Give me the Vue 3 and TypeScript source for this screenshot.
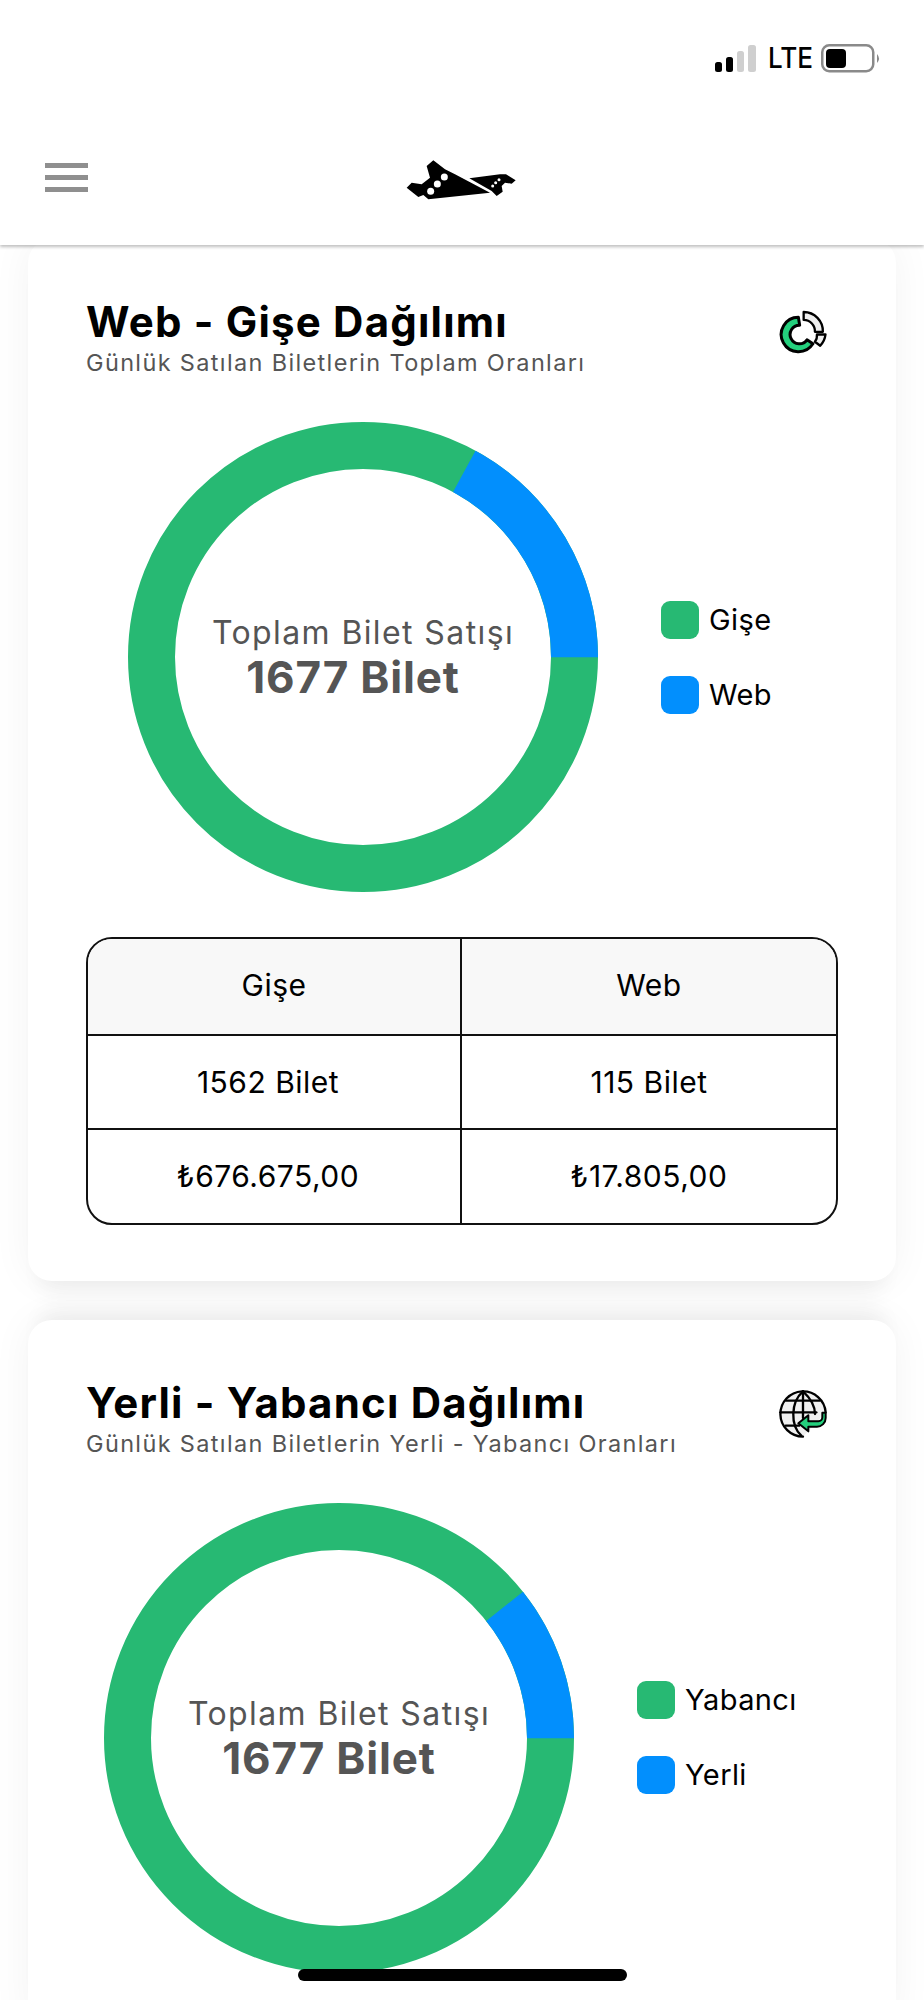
<script setup lang="ts">
interface Row { left: string; right: string }
interface Donut {
  title: string
  subtitle: string
  startDeg: number
  labels: [string, string]
  icon: 'pie' | 'globe'
}

const R = 211.5
const C = 2 * Math.PI * R

function blueDash(start: number) {
  const len = ((90 - start) / 360) * C
  return `${len} ${C - len}`
}
function blueOffset(start: number) {
  return -(start / 360) * C
}

const rows: Row[] = [
  { left: '1562 Bilet', right: '115 Bilet' },
  { left: '₺676.675,00', right: '₺17.805,00' },
]

const cards: Donut[] = [
  { title: 'Web - Gişe Dağılımı', subtitle: 'Günlük Satılan Biletlerin Toplam Oranları', startDeg: 28.6, labels: ['Gişe', 'Web'], icon: 'pie' },
  { title: 'Yerli - Yabancı Dağılımı', subtitle: 'Günlük Satılan Biletlerin Yerli - Yabancı Oranları', startDeg: 51.5, labels: ['Yabancı', 'Yerli'], icon: 'globe' },
]
</script>

<template>
  <div class="page">
    <div class="statusbar">
      <svg class="signal" width="41" height="27" viewBox="0 0 41 27">
        <rect x="0" y="17" width="7" height="10" rx="2.5" fill="#000" />
        <rect x="11" y="12" width="7" height="15" rx="2.5" fill="#000" />
        <rect x="22" y="6" width="7" height="21" rx="2.5" fill="#cfcfcf" />
        <rect x="33" y="0" width="8" height="27" rx="2.5" fill="#cfcfcf" />
      </svg>
      <span class="lte">LTE</span>
      <svg class="battery" width="60" height="29" viewBox="0 0 60 29">
        <rect x="1.25" y="1.25" width="51" height="26" rx="7" fill="#fff" stroke="#8a8a8a" stroke-width="2.5" />
        <rect x="5" y="5" width="20" height="19" rx="4" fill="#000" />
        <path d="M56 10 q4 4.5 0 9 z" fill="#8a8a8a" />
      </svg>
    </div>

    <header class="nav">
      <div class="burger"><i></i><i></i><i></i></div>
      <svg class="logo" width="160" height="80" viewBox="0 0 480 240">
        <path fill="#000" d="M80 140 L95 125 L125 130 L150 110 L140 75 L160 58 L195 85 L225 100 L330 155 L145 175 L130 162 L115 168 Z" />
        <path fill="#000" d="M268 112 L360 100 L378 100 L407 118 L395 128 L375 125 L365 135 L368 152 L350 165 L335 150 Z" />
        <circle cx="193" cy="108" r="10.5" fill="#fff" />
        <circle cx="172" cy="129" r="10.5" fill="#fff" />
        <circle cx="152" cy="151" r="10.5" fill="#fff" />
        <circle cx="357" cy="116" r="4.5" fill="#fff" />
        <circle cx="347" cy="125" r="4.5" fill="#fff" />
        <circle cx="338" cy="135" r="4.5" fill="#fff" />
      </svg>
    </header>

    <main class="content">
      <section v-for="(card, i) in cards" :key="card.title" class="card" :class="i === 0 ? 'card-first' : 'card-second'">
        <div class="card-head">
          <div class="heading">
            <h2>{{ card.title }}</h2>
            <p>{{ card.subtitle }}</p>
          </div>
          <svg v-if="card.icon === 'pie'" class="head-icon" width="50" height="48" viewBox="85 50 150 145" fill="none" stroke="#000" stroke-width="9" stroke-linejoin="round">
            <path d="M146 78 A52 52 0 1 0 190 158 L172 146 A28 28 0 1 1 150 102 Z" fill="#24d07d" />
            <path d="M162 62 A58 58 0 0 1 220 122 L196 122 A34 34 0 0 0 162 86 Z" fill="#efefef" stroke-width="7" />
            <path d="M202 130 L228 130 A58 58 0 0 1 212 164 L196 152 A30 30 0 0 0 202 130 Z" fill="#efefef" stroke-width="7" />
          </svg>
          <svg v-else class="head-icon" width="50" height="50" viewBox="55 55 150 150" fill="none" stroke="#000" stroke-width="7" stroke-linecap="round">
            <path d="M198 125 A68 68 0 1 0 130 198" fill="#f0f0f0" />
            <path d="M130 62 C92 95 92 165 125 195" />
            <path d="M130 62 C155 85 166 108 166 130" />
            <path d="M130 62 V142" />
            <path d="M80 90 H180" />
            <path d="M62 125 H170" />
            <path d="M78 165 H118" />
            <path d="M146 134 L116 158 L146 182 V168 H172 A26 26 0 0 0 198 142 V126 H188 V140 A12 12 0 0 1 176 152 H146 Z" fill="#24d07d" stroke-width="6" stroke-linejoin="round" />
          </svg>
        </div>

        <div class="chart-row">
          <div class="donut">
            <svg width="470" height="470" viewBox="0 0 470 470">
              <circle cx="235" cy="235" :r="R" fill="none" stroke="#27b973" stroke-width="47" />
              <circle
                cx="235" cy="235" :r="R" fill="none" stroke="#028ffd" stroke-width="47"
                :stroke-dasharray="blueDash(card.startDeg)"
                :stroke-dashoffset="blueOffset(card.startDeg)"
                transform="rotate(-90 235 235)"
              />
            </svg>
            <div class="donut-label">
              <span class="donut-cap">Toplam Bilet Satışı</span>
              <strong class="donut-val">1677 Bilet</strong>
            </div>
          </div>
          <ul class="legend">
            <li><span class="swatch green"></span>{{ card.labels[0] }}</li>
            <li><span class="swatch blue"></span>{{ card.labels[1] }}</li>
          </ul>
        </div>

        <div v-if="i === 0" class="table">
          <div class="cell th">Gişe</div>
          <div class="cell th last">Web</div>
          <template v-for="row in rows" :key="row.left">
            <div class="cell shifted">{{ row.left }}</div>
            <div class="cell last">{{ row.right }}</div>
          </template>
        </div>
      </section>
    </main>

    <div class="home"></div>
  </div>
</template>

<style>
html, body { margin: 0; background: #fff; }
</style>

<style scoped>
.page {
  position: relative;
  width: 924px;
  height: 2000px;
  overflow: hidden;
  background: #fff;
  font-family: Inter, "Noto Sans", sans-serif;
  color: #000;
}
.statusbar {
  position: relative;
  z-index: 3;
  height: 145px;
  box-sizing: border-box;
  padding: 44px 43px 0 0;
  display: flex;
  justify-content: flex-end;
  align-items: flex-start;
  background: #fff;
}
.signal { margin-right: 12px; margin-top: 1px; }
.lte { font-size: 29px; line-height: 28px; font-weight: 500; margin-right: 13px; transform: scaleX(.9); transform-origin: left; width: 40px; }
.nav {
  position: relative;
  z-index: 2;
  height: 100px;
  background: #fff;
  box-shadow: 0 2px 3px rgba(0, 0, 0, .25);
  display: flex;
  align-items: center;
  justify-content: center;
}
.burger {
  position: absolute;
  left: 45px;
  top: 18px;
  width: 43px;
  display: flex;
  flex-direction: column;
  gap: 7px;
}
.burger i { display: block; height: 5px; background: #8f8f8f; }
.logo { margin-bottom: 28px; margin-right: 4px; }
.content {
  display: flex;
  flex-direction: column;
  gap: 39px;
  padding: 0 28px;
  margin-top: -6px;
}
.card {
  background: #fff;
  border-radius: 24px;
  padding: 62px 57px 56px 58px;
}
.card-first { box-shadow: 0 0 40px rgba(0, 0, 0, .05), 0 22px 20px -12px rgba(0, 0, 0, .05); }
.card-second { box-shadow: 0 0 40px rgba(0, 0, 0, .05), 0 -22px 20px -12px rgba(0, 0, 0, .05); }
.card-head {
  display: flex;
  justify-content: space-between;
  align-items: flex-start;
}
h2 { margin: 0; font-size: 42px; line-height: 42px; font-weight: 700; letter-spacing: 1.2px; }
.heading p {
  margin: 8px 0 0;
  font-size: 23.5px;
  line-height: 24px;
  color: #555;
  letter-spacing: 1.35px;
}
.head-icon { margin: 7px 11px 0 0; }
.chart-row {
  display: flex;
  align-items: center;
  margin-top: 47px;
}
.card-first .chart-row { padding-left: 42px; }
.card-second .chart-row { padding-left: 18px; }
.donut { position: relative; width: 470px; height: 470px; }
.donut svg { display: block; }
.donut-label {
  position: absolute;
  inset: 0;
  box-sizing: border-box;
  padding-top: 4px;
  display: flex;
  flex-direction: column;
  align-items: center;
  justify-content: center;
  color: #555;
}
.donut-cap { font-size: 32px; line-height: 36px; letter-spacing: 1.4px; }
.donut-val { font-size: 44px; line-height: 52px; font-weight: 700; letter-spacing: .8px; margin-right: 20px; }
.legend {
  list-style: none;
  margin: 0 0 0 63px;
  padding: 0;
  display: flex;
  flex-direction: column;
  gap: 37px;
}
.legend li { display: flex; align-items: center; gap: 10px; font-size: 29px; line-height: 38px; letter-spacing: .4px; }
.swatch { width: 38px; height: 38px; border-radius: 9px; flex: none; }
.green { background: #27b973; }
.blue { background: #028ffd; }
.table {
  display: grid;
  grid-template-columns: 374px 1fr;
  grid-auto-rows: 94.5px;
  margin-top: 45px;
  border: 2.5px solid #111;
  border-radius: 26px;
  overflow: hidden;
  width: 752px;
  box-sizing: border-box;
}
.cell {
  display: flex;
  align-items: center;
  justify-content: center;
  font-size: 30px;
  letter-spacing: .5px;
  border-top: 2.5px solid #111;
  border-right: 2.5px solid #111;
}
.cell.last { border-right: 0; }
.cell.shifted { padding-right: 12px; }
.th { background: #f8f8f8; border-top: 0; padding-bottom: 3px; }
.home {
  position: absolute;
  left: 298px;
  top: 1969px;
  width: 329px;
  height: 12px;
  border-radius: 6px;
  background: #000;
  z-index: 4;
}
</style>
